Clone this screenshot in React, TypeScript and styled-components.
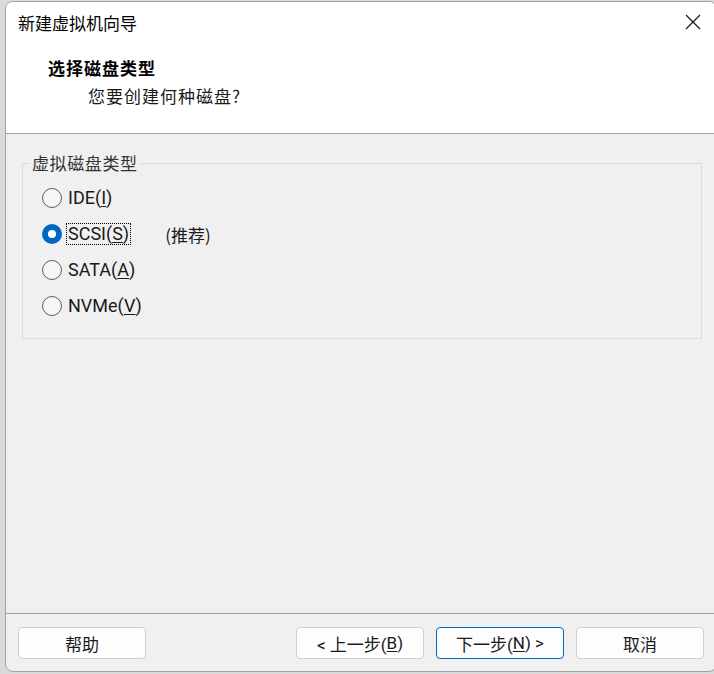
import React, { FC, useState } from "react";
import styled, { createGlobalStyle } from "styled-components";

const GlobalStyle = createGlobalStyle`
  html, body {
    margin: 0;
    padding: 0;
    background: #dadada;
    overflow: hidden;
  }
  body {
    font-family: Roboto, "Noto Sans CJK SC", sans-serif;
    font-size: 18px;
    color: #1a1a1a;
  }
`;

type DiskType = "ide" | "scsi" | "sata" | "nvme";

const options: { id: DiskType; name: string; key: string; note?: string }[] = [
  { id: "ide", name: "IDE", key: "I" },
  { id: "scsi", name: "SCSI", key: "S", note: "(推荐)" },
  { id: "sata", name: "SATA", key: "A" },
  { id: "nvme", name: "NVMe", key: "V" },
];

export const App: FC = () => {
  const [selected, setSelected] = useState<DiskType>("scsi");

  return (
    <>
      <GlobalStyle />
      <Window>
        <Header>
          <TitleBar>
            <Title>新建虚拟机向导</Title>
            <CloseButton aria-label="关闭">
              <svg width="16" height="16" viewBox="0 0 16 16">
                <path d="M1 1 L15 15 M15 1 L1 15" stroke="#1a1a1a" strokeWidth="1.3" fill="none" />
              </svg>
            </CloseButton>
          </TitleBar>
          <Heading>选择磁盘类型</Heading>
          <SubHeading>您要创建何种磁盘?</SubHeading>
        </Header>
        <Body>
          <Group>
            <Legend>虚拟磁盘类型</Legend>
            {options.map((opt) => (
              <OptionRow key={opt.id} onClick={() => setSelected(opt.id)}>
                <Radio $checked={selected === opt.id} />
                <OptionLabel $focused={selected === opt.id}>
                  {opt.name}(<u>{opt.key}</u>)
                </OptionLabel>
                {opt.note && <Note>{opt.note}</Note>}
              </OptionRow>
            ))}
          </Group>
        </Body>
        <Footer>
          <Button>帮助</Button>
          <Spacer />
          <Button>
            &lt; 上一步(<u>B</u>)
          </Button>
          <Button $primary>
            下一步(<u>N</u>) &gt;
          </Button>
          <Button>取消</Button>
        </Footer>
      </Window>
    </>
  );
};

const Window = styled.div`
  box-sizing: border-box;
  margin: 1px 0 0 5px;
  width: 712px;
  height: 671px;
  border: 1px solid #a3a3a3;
  border-radius: 8px;
  overflow: hidden;
  display: flex;
  flex-direction: column;
  background: #f0f0f0;
`;

const Header = styled.div`
  background: #ffffff;
  height: 132px;
  box-sizing: border-box;
  border-bottom: 1px solid #a0a0a0;
  display: flex;
  flex-direction: column;
`;

const TitleBar = styled.div`
  height: 40px;
  display: flex;
  align-items: center;
  justify-content: space-between;
  padding-left: 12px;
`;

const Title = styled.div`
  font-family: "Noto Sans CJK SC", sans-serif;
  font-size: 17px;
  color: #000;
`;

const CloseButton = styled.div`
  width: 46px;
  height: 40px;
  display: flex;
  align-items: center;
  justify-content: center;
`;

const Heading = styled.div`
  margin: 14px 0 0 42px;
  line-height: 24px;
  font-family: "Noto Sans CJK SC", sans-serif;
  font-weight: 700;
  font-size: 17px;
  letter-spacing: 1px;
  color: #000;
`;

const SubHeading = styled.div`
  margin: 4px 0 0 82px;
  line-height: 24px;
  font-family: "Noto Sans CJK SC", sans-serif;
  font-size: 17px;
  letter-spacing: 1px;
  color: #1a1a1a;
`;

const Body = styled.div`
  flex: 1;
  padding: 18px 14px 0 16px;
`;

const Group = styled.fieldset`
  margin: 0;
  height: 187px;
  box-sizing: border-box;
  border: 1px solid #dcdcdc;
  padding: 6px 0 0 19px;
  display: flex;
  flex-direction: column;
`;

const Legend = styled.legend`
  margin-left: -12px;
  padding: 0 2px;
  line-height: 22px;
  font-family: "Noto Sans CJK SC", sans-serif;
  font-size: 17px;
  letter-spacing: 0.6px;
  color: #333;
`;

const OptionRow = styled.div`
  height: 36px;
  display: flex;
  align-items: center;
  cursor: default;
`;

const Radio = styled.span<{ $checked?: boolean }>`
  box-sizing: border-box;
  width: 20px;
  height: 20px;
  border-radius: 50%;
  border: ${(p) => (p.$checked ? "none" : "1px solid #5c5c5c")};
  background: ${(p) => (p.$checked ? "#0067c0" : "#f6f6f6")};
  display: flex;
  align-items: center;
  justify-content: center;
  margin-right: 4px;

  &::after {
    content: "";
    display: ${(p) => (p.$checked ? "block" : "none")};
    width: 8px;
    height: 8px;
    border-radius: 50%;
    background: #fff;
  }
`;

const OptionLabel = styled.span<{ $focused?: boolean }>`
  line-height: 20px;
  padding: 0 1px;
  border: 1px dotted ${(p) => (p.$focused ? "#000" : "transparent")};

  u {
    text-underline-offset: 2px;
  }
`;

const Note = styled.span`
  margin-left: 34px;
  font-family: "Noto Sans CJK SC", sans-serif;
  font-size: 17px;
  color: #1a1a1a;
`;

const Footer = styled.div`
  height: 58px;
  box-sizing: border-box;
  border-top: 1px solid #a0a0a0;
  padding: 13px 12px 0 12px;
  display: flex;
  gap: 12px;
`;

const Spacer = styled.div`
  flex: 1;
`;

const Button = styled.div<{ $primary?: boolean }>`
  box-sizing: border-box;
  width: 128px;
  height: 32px;
  border-radius: 4px;
  border: 1px solid ${(p) => (p.$primary ? "#0067c0" : "#d0d0d0")};
  background: #fdfdfd;
  display: flex;
  align-items: center;
  justify-content: center;
  font-family: Roboto, "Noto Sans CJK SC", sans-serif;
  font-size: 17px;
  color: #1a1a1a;

  u {
    text-underline-offset: 2px;
  }
`;

export default App;
